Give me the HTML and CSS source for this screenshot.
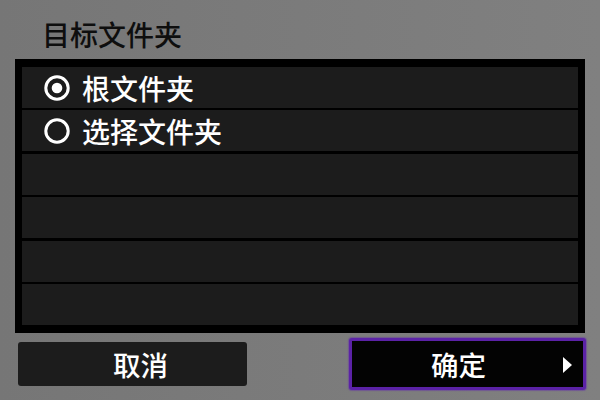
FILE: index.html
```html
<!DOCTYPE html>
<html lang="zh-CN">
<head>
<meta charset="utf-8">
<title>目标文件夹</title>
<link rel="stylesheet" href="styles.css">
</head>
<body>
<div class="screen">
  <div class="title">目标文件夹</div>
  <div class="list">
    <div class="row">
      <svg class="radio" viewBox="0 0 26 26" width="26" height="26"><circle cx="13" cy="13" r="11.2" fill="none" stroke="#fff" stroke-width="3"/><circle cx="13" cy="13" r="5.3" fill="#fff"/></svg>
      <span class="label">根文件夹</span>
    </div>
    <div class="row">
      <svg class="radio" viewBox="0 0 26 26" width="26" height="26"><circle cx="13" cy="13" r="11.2" fill="none" stroke="#fff" stroke-width="3"/></svg>
      <span class="label">选择文件夹</span>
    </div>
    <div class="row"></div>
    <div class="row"></div>
    <div class="row"></div>
    <div class="row"></div>
  </div>
  <div class="footer">
    <div class="btn cancel">取消</div>
    <div class="btn ok">确定<span class="arrow"></span></div>
  </div>
</div>
</body>
</html>
```
FILE: styles.css
```css
html, body {
  margin: 0;
  padding: 0;
}
body {
  width: 600px;
  height: 400px;
  overflow: hidden;
  background: #7b7b7b;
  font-family: "Noto Sans CJK SC", "Noto Sans", sans-serif;
}
.screen {
  width: 600px;
  height: 400px;
  display: flex;
  flex-direction: column;
  background: linear-gradient(90deg, #767676 0%, #7b7b7b 50%, #808080 100%);
}
.title {
  margin: 20px 0 11px 42px;
  height: 28px;
  font-size: 28px;
  line-height: 28px;
  font-weight: 500;
  color: #0e0e0e;
}
.list {
  margin: 0 15px;
  background: #000;
  padding: 8px 7px;
  display: flex;
  flex-direction: column;
  gap: 2.4px;
}
.row {
  height: 41px;
  background: #1c1c1c;
  display: flex;
  align-items: center;
  padding-left: 22px;
  color: #fff;
}
.radio {
  width: 26px;
  height: 26px;
  flex: none;
  margin-top: 1px;
}
.label {
  margin-left: 12px;
  font-size: 28px;
  line-height: 30px;
  font-weight: 500;
}
.footer {
  display: flex;
  justify-content: space-between;
  align-items: center;
  padding: 5px 14px 0 18px;
}
.btn {
  display: flex;
  align-items: center;
  justify-content: center;
  color: #fff;
  font-size: 27.5px;
  font-weight: 500;
  box-sizing: border-box;
  border-radius: 3px;
}
.cancel {
  width: 229px;
  height: 44px;
  background: #1c1c1c;
  padding-left: 16px;
}
.ok {
  position: relative;
  width: 237px;
  height: 52px;
  background: #030303;
  border: 3px solid #5b22a6;
  box-shadow: 0 0 1px 1px rgba(100, 50, 170, 0.5);
  padding-right: 18px;
}
.arrow {
  position: absolute;
  right: 11px;
  top: 16px;
  width: 0;
  height: 0;
  border-top: 8px solid transparent;
  border-bottom: 8px solid transparent;
  border-left: 9px solid #fff;
}
```
